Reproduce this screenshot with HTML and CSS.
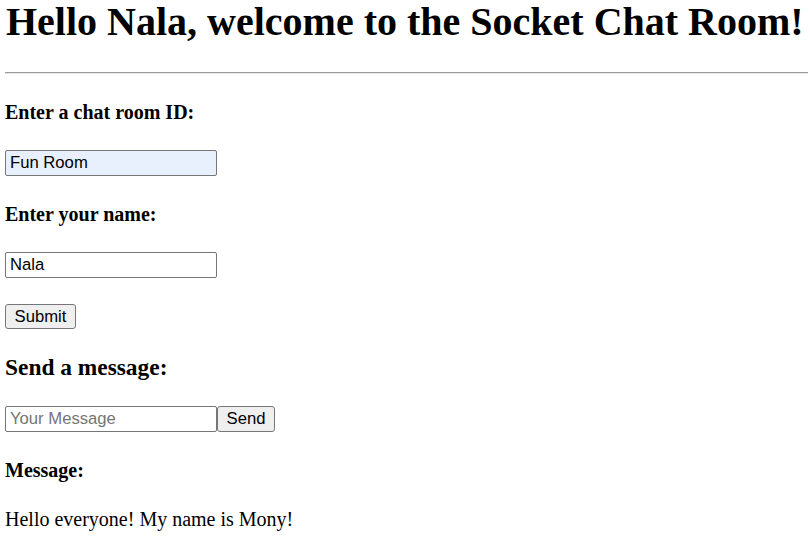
FILE: index.html
```html
<!DOCTYPE html>
<html>
<head>
<meta charset="utf-8">
<title>Socket Chat Room</title>
<link rel="stylesheet" href="styles.css">
</head>
<body>
  <h1 class="title">Hello Nala, welcome to the Socket Chat Room!</h1>
  <hr class="rule">
  <form class="join">
    <h4 class="label">Enter a chat room ID:</h4>
    <div class="field"><input class="text-input autofill" type="text" value="Fun Room"></div>
    <h4 class="label">Enter your name:</h4>
    <div class="field"><input class="text-input" type="text" value="Nala"></div>
    <div class="actions"><button class="btn btn-submit" type="button">Submit</button></div>
  </form>
  <h3 class="section">Send a message:</h3>
  <div class="send-row">
    <input class="text-input" type="text" placeholder="Your Message"><button class="btn btn-send" type="button">Send</button>
  </div>
  <h4 class="label">Message:</h4>
  <p class="message">Hello everyone! My name is Mony!</p>
</body>
</html>
```
FILE: styles.css
```css
html, body {
  background: #ffffff;
}
body {
  margin: 0;
  padding: 0 2px 0 5px;
  font-family: "Liberation Serif", "Times New Roman", serif;
  font-size: 20px;
  color: #000000;
}
.title {
  font-size: 40px;
  font-weight: bold;
  margin: -1px 0 0 1px;
  line-height: 46px;
}
.rule {
  margin: 27px 0 0 0;
  border: 0;
  border-top: 1px solid #9a9a9a;
  border-bottom: 1px solid #e6e6e6;
  height: 0;
}
.join {
  margin: 0;
}
.label {
  font-size: 20px;
  font-weight: bold;
  line-height: 23px;
  margin: 26.6px 0;
}
.field {
  display: flex;
}
.text-input {
  box-sizing: border-box;
  width: 212px;
  height: 26px;
  margin: 0;
  padding: 1px 4px;
  border: 1px solid #767676;
  border-radius: 2px;
  font-family: "Liberation Sans", Arial, sans-serif;
  font-size: 16.67px;
  color: #000000;
  background: #ffffff;
  outline: none;
}
.text-input.autofill {
  background: #e8f0fe;
}
.text-input::placeholder {
  color: #757575;
}
.actions {
  display: flex;
  margin-top: 26px;
}
.btn {
  box-sizing: border-box;
  height: 25px;
  margin: 0;
  padding: 0 8px;
  border: 1px solid #767676;
  border-radius: 3px;
  background: #efefef;
  font-family: "Liberation Sans", Arial, sans-serif;
  font-size: 16.67px;
  color: #000000;
}
.btn-submit {
  width: 71px;
}
.section {
  font-size: 23.4px;
  font-weight: bold;
  line-height: 27px;
  margin: 24.5px 0 25.4px;
}
.send-row {
  display: flex;
}
.btn-send {
  width: 58px;
  height: 26px;
}
.message {
  margin: 26px 0 0 0;
  line-height: 23px;
  font-size: 20px;
}
```
